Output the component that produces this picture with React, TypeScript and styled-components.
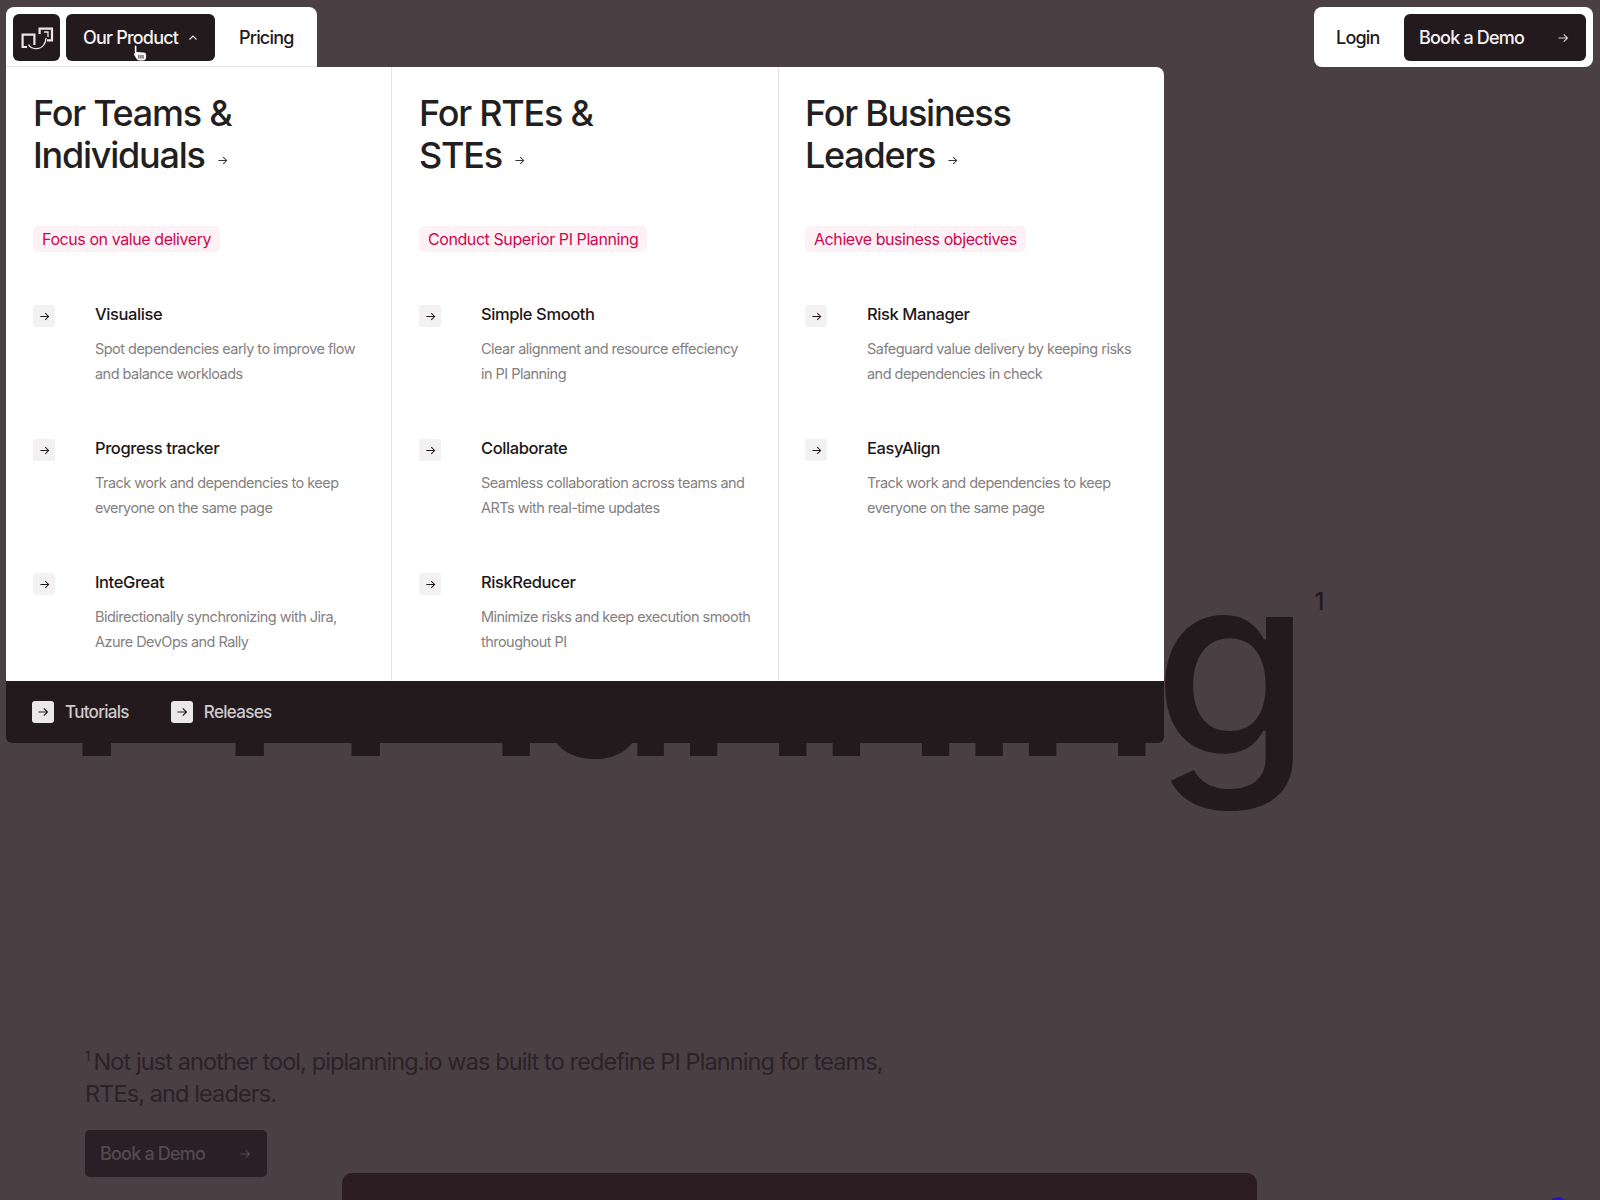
import React from "react";
import styled, { createGlobalStyle } from "styled-components";

const GlobalStyle = createGlobalStyle`
  html, body {
    margin: 0;
    padding: 0;
    height: 1200px;
    overflow: hidden;
    background: #4a3f43;
    font-family: Inter, "Liberation Sans", sans-serif;
    color: #231a1e;
  }
  * {
    box-sizing: border-box;
  }
`;

const Page = styled.div`
  position: relative;
  width: 1600px;
  height: 1200px;
  overflow: hidden;
  background: #4a3f43;
`;

const Hero = styled.main`
  display: flex;
  flex-direction: column;
  height: 100%;
  padding: 524px 0 0 85px;
`;

const Headline = styled.h1`
  margin: 0 0 0 -23px;
  display: flex;
  align-items: flex-start;
  font-size: 255px;
  line-height: 280px;
  font-weight: 500;
  letter-spacing: -10.7px;
  white-space: nowrap;
  color: #231a1e;
`;

const HeadlineMark = styled.sup`
  font-size: 24px;
  line-height: 24px;
  font-weight: 500;
  letter-spacing: 0;
  margin: 66px 0 0 14px;
`;

const Note = styled.p`
  margin: 242px 0 0;
  width: 820px;
  font-size: 23.5px;
  line-height: 32px;
  letter-spacing: -0.9px;
  color: #2c2227;

  sup {
    font-size: 13px;
    line-height: 0;
    margin-right: 4px;
  }
`;

const GhostButton = styled.div`
  margin-top: 20px;
  width: 182px;
  height: 47px;
  padding: 0 16px 0 15px;
  display: flex;
  align-items: center;
  justify-content: space-between;
  border-radius: 5px;
  background: #2a1f24;
  color: #544a4e;
  font-size: 18px;
  font-weight: 500;
  letter-spacing: -0.8px;
`;

const VideoBlock = styled.div`
  position: absolute;
  left: 342px;
  top: 1173px;
  width: 915px;
  height: 60px;
  border-radius: 10px;
  background: #2a1c20;
`;

const BlueDot = styled.div`
  position: absolute;
  left: 1548px;
  top: 1197px;
  width: 20px;
  height: 20px;
  border-radius: 50%;
  background: #2a10c8;
`;

const TopBar = styled.header`
  position: absolute;
  top: 7px;
  left: 6px;
  right: 7px;
  display: flex;
  align-items: flex-start;
  justify-content: space-between;
`;

const NavGroup = styled.nav`
  width: 311px;
  height: 60px;
  padding: 7px 7px 5px;
  display: flex;
  align-items: stretch;
  gap: 6px;
  background: #fff;
  border-radius: 8px 8px 0 0;
  border-bottom: 1px solid #e6e4e5;
`;

const ActionGroup = styled.div`
  width: 279px;
  height: 60px;
  padding: 7px 7px 6px;
  display: flex;
  align-items: stretch;
  justify-content: space-between;
  background: #fff;
  border-radius: 8px;
`;

const LogoTile = styled.div`
  width: 47px;
  display: flex;
  align-items: center;
  justify-content: center;
  background: #231a1e;
  border-radius: 6px;
`;

const DarkButton = styled.div<{ $width: number; $pad: number }>`
  width: ${(p) => p.$width}px;
  display: flex;
  align-items: center;
  justify-content: space-between;
  padding: 0 17px 0 ${(p) => p.$pad}px;
  background: #231a1e;
  color: #f4f1f2;
  border-radius: 6px;
  font-size: 18px;
  font-weight: 500;
  letter-spacing: -0.8px;
`;

const NavLink = styled.div`
  display: flex;
  align-items: center;
  padding: 0 0 0 18px;
  color: #231a1e;
  font-size: 18px;
  font-weight: 500;
  letter-spacing: -0.8px;
`;

const LoginLink = styled(NavLink)`
  padding-left: 15px;
`;

const Cursor = styled.svg`
  position: absolute;
  left: 133px;
  top: 45px;
`;

const Menu = styled.section`
  position: absolute;
  top: 67px;
  left: 6px;
  width: 1158px;
`;

const Columns = styled.div`
  height: 614px;
  display: grid;
  grid-template-columns: 386px 387px 385px;
  background: #fff;
  border-radius: 0 8px 0 0;
`;

const Column = styled.div`
  padding: 25px 10px 0 27px;
  border-right: 1px solid #e6e4e5;

  &:last-child {
    padding-left: 26px;
    border-right: 0;
  }
`;

const ColumnTitle = styled.h2`
  margin: 0;
  height: 84px;
  font-size: 36px;
  line-height: 42px;
  font-weight: 500;
  letter-spacing: -1.25px;
  color: #231f20;

  svg {
    margin-left: 12px;
    position: relative;
    top: -2px;
  }
`;

const Tag = styled.span`
  display: inline-block;
  margin-top: 50px;
  padding: 0 9px;
  height: 26px;
  line-height: 26px;
  background: #fdf1f5;
  color: #c9084f;
  border-radius: 5px;
  font-size: 16px;
  letter-spacing: -0.42px;
`;

const ItemList = styled.div`
  margin-top: 50px;
  display: flex;
  flex-direction: column;
  gap: 32px;
`;

const Item = styled.article`
  display: grid;
  grid-template-columns: 62px 1fr;
  height: 102px;
`;

const ItemIcon = styled.div`
  width: 22px;
  height: 22px;
  margin-top: 3px;
  display: flex;
  align-items: center;
  justify-content: center;
  background: #f3f1f2;
  border-radius: 3px;
`;

const ItemName = styled.h3`
  margin: 0;
  font-size: 16.5px;
  line-height: 24px;
  font-weight: 500;
  letter-spacing: -0.4px;
  color: #1d1719;
`;

const ItemText = styled.p`
  margin: 10px 0 0;
  font-size: 14.5px;
  line-height: 25px;
  letter-spacing: -0.53px;
  color: #847f81;
  white-space: pre;
`;

const MenuFooter = styled.div`
  height: 62px;
  padding: 0 0 0 26px;
  display: flex;
  align-items: center;
  gap: 42px;
  background: #231a1e;
  border-radius: 0 0 6px 6px;
`;

const FooterLink = styled.div`
  display: flex;
  align-items: center;
  gap: 11px;
  color: #cfcacc;
  font-size: 17px;
  font-weight: 500;
  letter-spacing: -0.7px;
`;

const FooterIcon = styled.div`
  width: 22px;
  height: 22px;
  display: flex;
  align-items: center;
  justify-content: center;
  background: #ece8ea;
  border-radius: 3px;
`;

const Arrow = ({ size = 12, color = "#231a1e" }: { size?: number; color?: string }) => (
  <svg width={size} height={size} viewBox="0 0 12 12" fill="none" stroke={color} strokeWidth="1.1">
    <path d="M1.5 6h9M6.8 2.3 10.5 6l-3.7 3.7" />
  </svg>
);

const Logo = () => (
  <svg width="34" height="26" viewBox="0 0 34 26" fill="none" stroke="#ebe6e8" strokeWidth="2.2">
    <path d="M7 22H2.600V9.600H14.400V20" />
    <path d="M19.600 9V3.600H32V15.400H27" />
    <path d="M24 7H28V12" strokeWidth="1.300" />
    <path d="M8.500 19.500C11 24.500 20 25.500 24 19.500C25.500 17.500 26 15.500 26 13" strokeWidth="1.300" />
  </svg>
);

type Entry = { name: string; text: string };
type Group = { title: string; tag: string; items: Entry[] };

const groups: Group[] = [
  {
    title: "For Teams &\nIndividuals",
    tag: "Focus on value delivery",
    items: [
      { name: "Visualise", text: "Spot dependencies early to improve flow\nand balance workloads" },
      { name: "Progress tracker", text: "Track work and dependencies to keep\neveryone on the same page" },
      { name: "InteGreat", text: "Bidirectionally synchronizing with Jira,\nAzure DevOps and Rally" },
    ],
  },
  {
    title: "For RTEs &\nSTEs",
    tag: "Conduct Superior PI Planning",
    items: [
      { name: "Simple Smooth", text: "Clear alignment and resource effeciency\nin PI Planning" },
      { name: "Collaborate", text: "Seamless collaboration across teams and\nARTs with real-time updates" },
      { name: "RiskReducer", text: "Minimize risks and keep execution smooth\nthroughout PI" },
    ],
  },
  {
    title: "For Business\nLeaders",
    tag: "Achieve business objectives",
    items: [
      { name: "Risk Manager", text: "Safeguard value delivery by keeping risks\nand dependencies in check" },
      { name: "EasyAlign", text: "Track work and dependencies to keep\neveryone on the same page" },
    ],
  },
];

const App: React.FC = () => {
  return (
    <Page>
      <GlobalStyle />
      <Hero>
        <Headline>
          PI Planning
          <HeadlineMark>1</HeadlineMark>
        </Headline>
        <Note>
          <sup>1</sup>Not just another tool, piplanning.io was built to redefine PI Planning for teams, RTEs, and leaders.
        </Note>
        <GhostButton>
          Book a Demo
          <Arrow color="#544a4e" />
        </GhostButton>
      </Hero>
      <VideoBlock />
      <BlueDot />

      <TopBar>
        <NavGroup>
          <LogoTile>
            <Logo />
          </LogoTile>
          <DarkButton $width={149} $pad={17}>
            Our Product
            <svg width="10" height="10" viewBox="0 0 10 10" fill="none" stroke="#f4f1f2" strokeWidth="1.2">
              <path d="M1.500 6.500 5 3l3.500 3.500" />
            </svg>
          </DarkButton>
          <NavLink>Pricing</NavLink>
        </NavGroup>
        <ActionGroup>
          <LoginLink>Login</LoginLink>
          <DarkButton $width={182} $pad={15}>
            Book a Demo
            <Arrow color="#d9d3d6" />
          </DarkButton>
        </ActionGroup>
      </TopBar>

      <Menu>
        <Columns>
          {groups.map((group) => {
            const [first, second] = group.title.split("\n");
            return (
              <Column key={group.title}>
                <ColumnTitle>
                  {first}
                  <br />
                  {second}
                  <Arrow size={11} color="#3a3336" />
                </ColumnTitle>
                <Tag>{group.tag}</Tag>
                <ItemList>
                  {group.items.map((item) => (
                    <Item key={item.name}>
                      <ItemIcon>
                        <Arrow size={11} />
                      </ItemIcon>
                      <div>
                        <ItemName>{item.name}</ItemName>
                        <ItemText>{item.text}</ItemText>
                      </div>
                    </Item>
                  ))}
                </ItemList>
              </Column>
            );
          })}
        </Columns>
        <MenuFooter>
          <FooterLink>
            <FooterIcon>
              <Arrow />
            </FooterIcon>
            Tutorials
          </FooterLink>
          <FooterLink>
            <FooterIcon>
              <Arrow />
            </FooterIcon>
            Releases
          </FooterLink>
        </MenuFooter>
      </Menu>

      <Cursor width="14" height="16" viewBox="0 0 14 17">
        <path
          d="M1.500 1.200C1.500.4 3.200.4 3.200 1.200V7.500L11 8C12.500 8.200 13.500 9 13.500 10.500V13C13.500 15 12.300 16.500 10.300 16.500H6C4.800 16.500 4 15.800 3.500 15L.5 10C.1 9.300 1.500 8.300 2.200 9.200L1.500 7.500Z"
          fill="#fff"
        />
        <path d="M5.800 10.500V14.500M8 10.500V14.500M10.200 10.500V14.500" stroke="#231a1e" strokeWidth="1" fill="none" />
      </Cursor>
    </Page>
  );
};

export default App;
